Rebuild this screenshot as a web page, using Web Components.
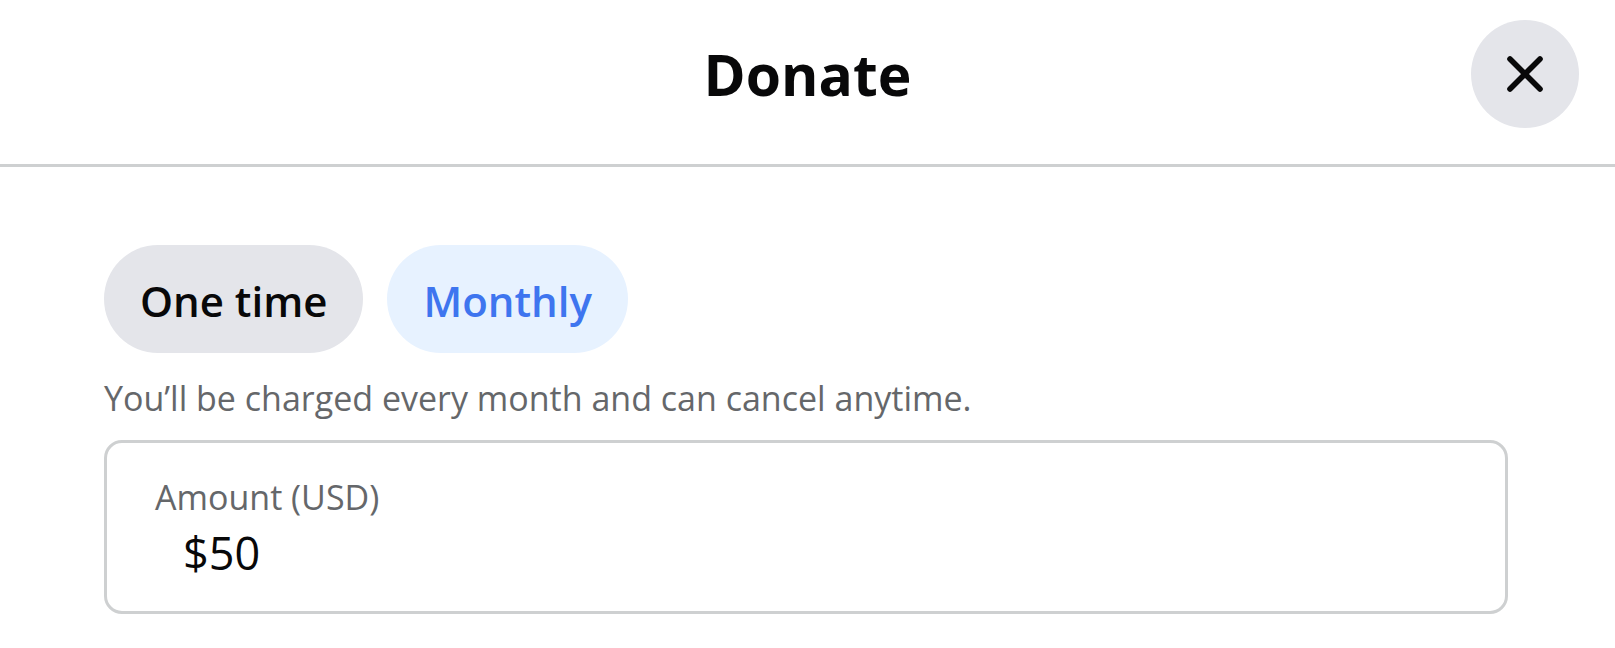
<!DOCTYPE html>
<html lang="en">
<head>
<meta charset="utf-8">
<meta name="viewport" content="width=device-width, initial-scale=1">
<title>Donate</title>
<style>
  body { margin: 0; background: #fff; color: #080809; font-family: "Open Sans", "Noto Sans", sans-serif; }
</style>
</head>
<body>
<donate-dialog>
  <dialog-header slot="header">Donate</dialog-header>
  <frequency-picker>
    <frequency-pill>One time</frequency-pill>
    <frequency-pill selected>Monthly</frequency-pill>
  </frequency-picker>
  <helper-text>You’ll be charged every month and can cancel anytime.</helper-text>
  <amount-field label="Amount (USD)" value="$50"></amount-field>
</donate-dialog>
<script>
  class ShadowElement extends HTMLElement {
    connectedCallback() {
      if (!this.shadowRoot) this.attachShadow({ mode: "open" }).innerHTML = this.render();
    }
  }

  customElements.define("donate-dialog", class extends ShadowElement {
    render() {
      return `<style>
        :host { display: block; }
        main { display: flex; flex-direction: column; padding: 78px 107px 34px 104px; }
      </style>
      <section role="dialog" aria-label="Donate">
        <slot name="header"></slot>
        <main><slot></slot></main>
      </section>`;
    }
  });

  customElements.define("dialog-header", class extends ShadowElement {
    render() {
      return `<style>
        :host { display: grid; grid-template-columns: 1fr auto 1fr; align-items: center;
          padding: 20px 36px 36px; border-bottom: 3px solid #ced0d1; }
        h1 { grid-column: 2; margin: 0; font-size: 57px; line-height: 80px; font-weight: 700; }
        button { justify-self: end; display: grid; place-items: center; width: 108px; height: 108px;
          padding: 0; border: 0; border-radius: 50%; background: #e4e5ea; color: #080809; cursor: pointer; }
        svg { width: 36px; height: 36px; fill: none; stroke: currentColor; stroke-width: 5.6; stroke-linecap: round; }
      </style>
      <h1><slot></slot></h1>
      <button type="button" aria-label="Close">
        <svg viewBox="0 0 36 36" aria-hidden="true"><path d="M3 3 33 33M33 3 3 33"/></svg>
      </button>`;
    }
  });

  customElements.define("frequency-picker", class extends ShadowElement {
    render() {
      return `<style>
        :host { display: flex; flex-wrap: wrap; gap: 24px; }
      </style><slot></slot>`;
    }
  });

  customElements.define("frequency-pill", class extends ShadowElement {
    render() {
      return `<style>
        :host { display: block; }
        button { height: 108px; padding: 4px 36px 0; border: 0; border-radius: 54px; background: #e4e5ea;
          color: #080809; font: 600 42px/60px "Open Sans", "Noto Sans", sans-serif; cursor: pointer; }
        :host([selected]) button { background: #e7f2ff; color: #3e75ef; }
      </style>
      <button type="button" aria-pressed="${this.hasAttribute("selected")}"><slot></slot></button>`;
    }
  });

  customElements.define("helper-text", class extends ShadowElement {
    render() {
      return `<style>
        :host { display: block; padding: 21px 0 18px; color: #65676a; font-size: 34px; line-height: 48px; }
      </style><slot></slot>`;
    }
  });

  customElements.define("amount-field", class extends ShadowElement {
    render() {
      return `<style>
        :host { display: block; border: 3px solid #ced0d1; border-radius: 18px; padding: 30px 48px 26px; }
        label { display: block; color: #65676a; font-size: 34px; line-height: 48px; }
        input { display: block; box-sizing: border-box; width: 100%; height: 64px; margin: 0; padding: 0 28px;
          border: 0; outline: 0; background: none; color: #080809;
          font: 400 45px/64px "Open Sans", "Noto Sans", sans-serif; }
      </style>
      <label for="amount">${this.getAttribute("label")}</label>
      <input id="amount" type="text" inputmode="decimal" value="${this.getAttribute("value")}">`;
    }
  });
</script>
</body>
</html>
